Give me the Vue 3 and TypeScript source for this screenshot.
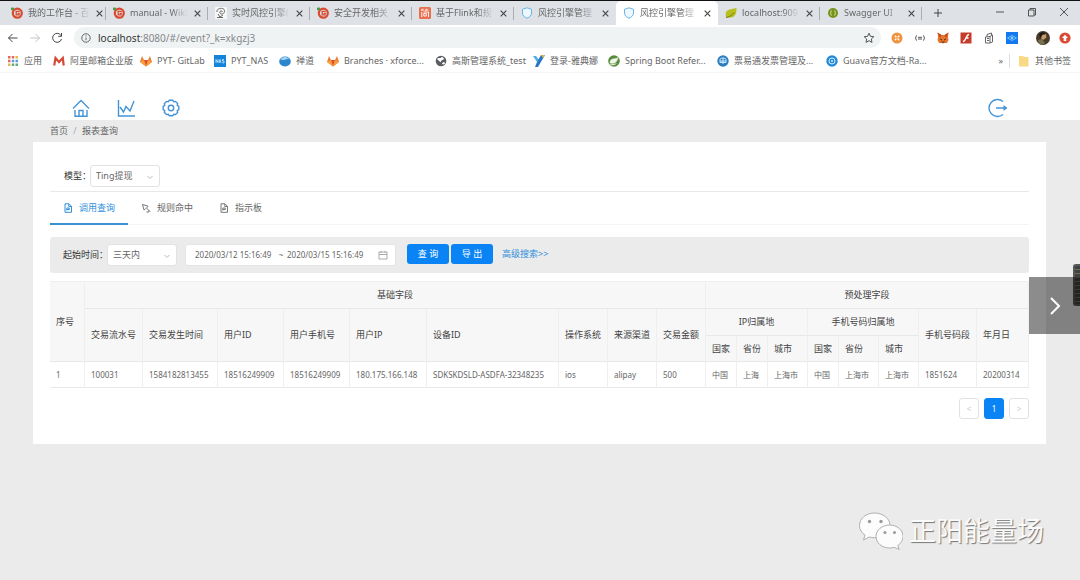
<script setup lang="ts">
import { ref } from 'vue'

interface BrowserTab { icon: string; title: string; active?: boolean }
interface Bookmark { icon: string; title: string; width: number }

const browserTabs: BrowserTab[] = [
  { icon: 'g', title: '我的工作台 - 百' },
  { icon: 'g', title: 'manual - Wiki' },
  { icon: 'sketch', title: '实时风控引擎(' },
  { icon: 'g', title: '安全开发相关' },
  { icon: 'jian', title: '基于Flink和规' },
  { icon: 'shield', title: '风控引擎管理' },
  { icon: 'shield', title: '风控引擎管理', active: true },
  { icon: 'leaf', title: 'localhost:909' },
  { icon: 'swagger', title: 'Swagger UI' },
]

const bookmarks: Bookmark[] = [
  { icon: 'apps', title: '应用', width: 45 },
  { icon: 'mail', title: '阿里邮箱企业版', width: 87 },
  { icon: 'fox', title: 'PYT- GitLab', width: 74 },
  { icon: 'nas', title: 'PYT_NAS', width: 65 },
  { icon: 'zen', title: '禅道', width: 48 },
  { icon: 'fox', title: 'Branches · xforce...', width: 108 },
  { icon: 'globe', title: '高斯管理系统_test', width: 98 },
  { icon: 'why', title: '登录-雅典娜', width: 75 },
  { icon: 'spring', title: 'Spring Boot Refer...', width: 109 },
  { icon: 'ticket', title: '票易通发票管理及...', width: 109 },
  { icon: 'guava', title: 'Guava官方文档-Ra...', width: 98 },
]

const columnWidths = [35, 58, 75, 66, 66, 77, 132, 49, 49, 49, 31, 31, 40, 31, 40, 40, 58, 52]
const baseFields = ['交易流水号', '交易发生时间', '用户ID', '用户手机号', '用户IP', '设备ID', '操作系统', '来源渠道', '交易金额']
const regionFields = ['国家', '省份', '城市', '国家', '省份', '城市']
const rows = [
  ['1', '100031', '1584182813455', '18516249909', '18516249909', '180.175.166.148', 'SDKSKDSLD-ASDFA-32348235', 'ios', 'alipay', '500', '中国', '上海', '上海市', '中国', '上海市', '上海市', '1851624', '20200314'],
]

const url = ref('localhost:8080/#/event?_k=xkgzj3')
const model = ref('Ting提现')
const period = ref('三天内')
const rangeStart = ref('2020/03/12 15:16:49')
const rangeEnd = ref('2020/03/15 15:16:49')
const views = [
  { icon: 'file', title: '调用查询' },
  { icon: 'branch', title: '规则命中' },
  { icon: 'file', title: '指示板' },
]
const activeView = ref(0)
</script>

<template>
  <div class="screen">
    <header class="browser">
      <div class="tab-strip">
        <div v-for="(tab, i) in browserTabs" :key="i" class="browser-tab" :class="{ active: tab.active, before: i === 5 }">
          <svg class="icon12" viewBox="0 0 12 12" aria-hidden="true">
            <g v-if="tab.icon === 'g'">
              <circle cx="6.3" cy="6.2" r="4.5" fill="none" stroke="#d9492f" stroke-width="2.2" />
              <path d="M8.8 4.4H5.2v3.5h3V6.3H6.6" fill="none" stroke="#d9492f" stroke-width="1.3" />
              <path d="M0 .6h3v2.6H0z" fill="#4b9b46" />
            </g>
            <g v-else-if="tab.icon === 'sketch'">
              <path d="M0 0h12v12H0z" fill="#f7f7f7" />
              <path d="M2 5C1 1 9 0 9.500 3.500S6 8 5 6s2-3 2.500-1M3 7l2 3 3-2M2 10.500h6" fill="none" stroke="#666" stroke-width="1" />
            </g>
            <g v-else-if="tab.icon === 'jian'">
              <rect width="12" height="12" rx="1.500" fill="#e9704f" />
              <path d="M2.500 3h2.800M6.500 3h3M3.500 1.700 2.300 4M7.500 1.700 6.500 4M2.800 5v5M4.500 5h5v5M4.800 6.500h2.500v2.500H4.800z" fill="none" stroke="#fff" stroke-width=".9" />
            </g>
            <path v-else-if="tab.icon === 'shield'" d="M6 .8 10.500 2.300V6c0 2.500-2 4.200-4.500 5.200C3.500 10.200 1.500 8.500 1.500 6V2.300z" fill="#edf7fd" stroke="#68b5e4" />
            <g v-else-if="tab.icon === 'leaf'">
              <path d="M1 10.500C-.5 3 3 2.500 11.500 1c0 6-1 9-6 9.500z" fill="#b8bf1e" />
              <path d="M1 10.500c3-.5 6-2 8-5" fill="none" stroke="#747d12" stroke-width="1" />
            </g>
            <g v-else>
              <circle cx="6" cy="6" r="5" fill="#77921d" />
              <path d="M4.500 3.500c-1 0 0 2-1.200 2.500 1.200.5.2 2.500 1.200 2.500M7.500 3.500c1 0 0 2 1.200 2.500-1.200.5-.2 2.500-1.200 2.500" fill="none" stroke="#dce8a5" />
            </g>
          </svg>
          <span class="tab-title">{{ tab.title }}</span>
          <button class="plain close" aria-label="关闭标签页">
            <svg viewBox="0 0 8 8"><path d="m1.500 1.500 5 5m0-5-5 5" /></svg>
          </button>
        </div>
        <button class="plain new-tab" aria-label="新标签页">
          <svg viewBox="0 0 10 10"><path d="M5 1v8M1 5h8" /></svg>
        </button>
        <div class="window-controls">
          <button class="plain" aria-label="最小化"><svg viewBox="0 0 10 10"><path d="M1 5h8" /></svg></button>
          <button class="plain" aria-label="还原"><svg viewBox="0 0 10 10"><path d="M1.500 3h5.500v6H1.500zM3 3V1.500h5.500V8H7" /></svg></button>
          <button class="plain" aria-label="关闭"><svg viewBox="0 0 10 10"><path d="m1 1 8 8m0-8L1 9" /></svg></button>
        </div>
      </div>

      <div class="toolbar">
        <button class="plain nav" aria-label="后退"><svg viewBox="0 0 12 12"><path d="M10.500 6h-9M5.500 2l-4 4 4 4" stroke="#444" /></svg></button>
        <button class="plain nav" aria-label="前进"><svg viewBox="0 0 12 12"><path d="M1.500 6h9M6.500 2l4 4-4 4" stroke="#c3c3c3" /></svg></button>
        <button class="plain nav" aria-label="刷新"><svg viewBox="0 0 12 12"><path d="M9.800 3.200A4.500 4.500 0 1 0 10.500 7M10.500 1v3.300H7.200" stroke="#444" /></svg></button>
        <div class="address">
          <svg class="info" viewBox="0 0 10 10" aria-hidden="true"><circle cx="5" cy="5" r="4.200" /><path d="M5 4.500v2.800M5 2.500v1" /></svg>
          <label class="url">
            <span class="url-shown"><b>{{ url.slice(0, 9) }}</b>{{ url.slice(9) }}</span>
            <input v-model="url" aria-label="地址" />
          </label>
          <button class="plain star" aria-label="收藏"><svg viewBox="0 0 12 12"><path d="m6 1.200 1.400 3.100 3.400.4-2.500 2.300.7 3.400L6 8.700l-3 1.700.7-3.400L1.200 4.700l3.400-.4z" /></svg></button>
        </div>
        <div class="extensions">
          <svg class="icon12" viewBox="0 0 12 12"><circle cx="6" cy="6" r="5.500" fill="#f1923c" /><path d="m3.800 3.800 4.400 4.400m0-4.400L3.800 8.200" stroke="#fff" stroke-width="1.300" /><circle cx="6" cy="6" r="1.500" fill="#f6b277" /></svg>
          <svg class="icon12" viewBox="0 0 12 12"><path d="M3 3.500C1.500 3.500 2.500 6 1 6c1.500 0 .5 2.500 2 2.500M9 3.500c1.500 0 .5 2.500 2 2.500-1.500 0-.5 2.500-2 2.500M4 5.300h4M4 7h4" fill="none" stroke="#555" /></svg>
          <svg class="icon12" viewBox="0 0 12 12"><path d="m.5.500 4 2.500h3l4-2.500L11 5l.5 3-1.500 3H7.500L6 11.500 4.500 11H2L.5 8 1 5z" fill="#e8752c" /><path d="m.5.500 4 2.500L3 6zm11 0-4 2.500L9 6z" fill="#bd4c21" /><path d="m3 7 2 1M9 7 7 8M4.500 10h3" stroke="#4d352c" /></svg>
          <svg class="icon12" viewBox="0 0 12 12"><path d="M.5.500h11v11H.5z" fill="#c63c2c" /><path d="M9 2.500C6 2.500 6 9.500 3 9.500M5.500 6h3" fill="none" stroke="#fff" stroke-width="1.400" /></svg>
          <svg class="icon12" viewBox="0 0 12 12"><path d="M4 5V2.500L8.500 1v2M2.500 5 7 4.500v6.500H2.500zM7 4.500 9.500 3v7L7 11M4 6.500h2M4 8.500h2" fill="none" stroke="#666" /></svg>
          <svg class="icon12" viewBox="0 0 12 12"><path d="M0 0h12v12H0z" fill="#1479ee" /><path d="m1.500 6 4.500-2.500L10.500 6 6 8.500z" fill="none" stroke="#71c5ff" /><circle cx="6" cy="6" r="1.300" fill="#8dd8ff" /></svg>
          <svg class="avatar" viewBox="0 0 14 14"><circle cx="7" cy="7" r="7" fill="#493b2a" /><path d="M6 2c4-1 5 3 4 5l-3 2L5 7z" fill="#c79b65" /><path d="m2 9 4-1 3 4-3 2C4 14 2 12 2 9z" fill="#75714c" /><path d="M3 4c1-3 5-4 7-1L6 4 5 7z" fill="#1d1a17" /></svg>
          <svg class="icon12" viewBox="0 0 12 12"><circle cx="6" cy="6" r="5.600" fill="#da4b34" /><path d="M6 2.800 9 6H7.300v3H4.700V6H3z" fill="#fff" /></svg>
        </div>
      </div>

      <nav class="bookmarks" aria-label="书签">
        <a v-for="mark in bookmarks" :key="mark.title" href="#" class="bookmark" :style="{ width: mark.width + 'px' }">
          <svg class="icon12" :class="{ small: mark.icon === 'apps' }" viewBox="0 0 12 12" aria-hidden="true">
            <g v-if="mark.icon === 'apps'">
              <path d="M0 0h3v3H0zM4.500 0h3v3h-3zM0 4.500h3v3H0z" fill="#e36b5c" />
              <path d="M9 0h3v3H9zM0 9h3v3H0z" fill="#e6b84e" />
              <path d="M4.500 4.500h3v3h-3zM9 4.500h3v3H9z" fill="#5c9dde" />
              <path d="M4.500 9h3v3h-3zM9 9h3v3H9z" fill="#62ab7a" />
            </g>
            <path v-else-if="mark.icon === 'mail'" d="M1.200 10.500 2.500 3 6 7l3.800-4 .9 7.500" fill="none" stroke="#d54a35" stroke-width="2.200" />
            <g v-else-if="mark.icon === 'fox'">
              <path d="M6 11.500 0 7 2 1l2 4h4l2-4 2 6z" fill="#ef7c32" />
              <path d="M6 11.500 4 5h4z" fill="#df5035" />
              <path d="m0 7 4-2 2 6.500zM12 7 8 5l-2 6.500z" fill="#f6a13c" />
            </g>
            <g v-else-if="mark.icon === 'nas'">
              <path d="M0 0h12v12H0z" fill="#1384dc" />
              <path d="M2 8V4.500l2 3V4.500M5 8l1-3.500L7 8M10 4.500H8.500V6H10v1.800H8.300" fill="none" stroke="#d7efff" stroke-width=".8" />
            </g>
            <g v-else-if="mark.icon === 'zen'">
              <ellipse cx="6" cy="6.500" rx="5.800" ry="5" fill="#2d86cb" />
              <path d="M1.500 5.500c1.500-2 3 .5 5-1 1.500-1 2.500-.5 3.500 0-1-2-2.500-2.500-4.500-2.500S2 3 1.500 5.500z" fill="#9ed2f3" />
            </g>
            <g v-else-if="mark.icon === 'globe'">
              <circle cx="6" cy="6" r="5.300" fill="#5a5e62" />
              <path d="M2 4c2-2 3 0 4-1.500S9 3 9 4 6 5 6 6.500 4 6 2 4zM7 9c0-2 3-2 3-1s-1.500 2-3 1z" fill="#fff" />
            </g>
            <g v-else-if="mark.icon === 'why'">
              <path d="M0 1h3l3 4-2 2z" fill="#51aee8" />
              <path d="M8 0h4L5 12H2l2-5z" fill="#2877c7" /><path d="m8 0 4 0-2 3z" fill="#e7b54a" />
            </g>
            <g v-else-if="mark.icon === 'spring'">
              <circle cx="6" cy="6" r="5.800" fill="#578c3b" />
              <path d="M2 8c5 1 7-1 8-5.500C8 5 2 2 2 8zm0 1.500c3 1 5 0 6.500-1" fill="#eef7e7" stroke="#eef7e7" stroke-width=".6" />
            </g>
            <g v-else-if="mark.icon === 'ticket'">
              <circle cx="6" cy="6" r="5.700" fill="#2b7dbd" />
              <path d="M3 4.500c0-2 6-2 6 0v3H3zM6 3v6M3 6h6" fill="none" stroke="#cce9ff" />
            </g>
            <g v-else>
              <circle cx="6" cy="6" r="5.700" fill="#2088d8" />
              <circle cx="6" cy="6" r="3" fill="none" stroke="#d9f1ff" /><circle cx="6" cy="6" r="1" fill="#d9f1ff" />
            </g>
          </svg>
          <span>{{ mark.title }}</span>
        </a>
        <button class="plain more" aria-label="更多书签">»</button>
        <a href="#" class="bookmark other">
          <svg class="icon12" viewBox="0 0 12 12" aria-hidden="true"><path d="M1 1h4l1 1h4.500v9.500H1z" fill="#f9d983" /></svg>
          <span>其他书签</span>
        </a>
      </nav>
    </header>

    <nav class="site-nav" aria-label="主导航">
      <a href="#" aria-label="首页"><svg viewBox="0 0 18 18"><path d="M1 9.500 9 1.500l8 8M3 11v6.200h12V11M7 17v-5.500h4V17" /></svg></a>
      <a href="#" aria-label="报表"><svg viewBox="0 0 18 18"><path d="M1.500 1v16H18M3 8l3.500 5L9 7.500l4 4.500L17 2" /></svg></a>
      <a href="#" aria-label="设置"><svg viewBox="0 0 18 18"><path d="M7.300 1.200h3.400l1 1.500 1.800-.3 2.100 2.100-.3 1.800 1.500 1v3.400l-1.500 1 .3 1.800-2.100 2.100-1.800-.3-1 1.500H7.300l-1-1.500-1.800.3-2.100-2.100.3-1.800-1.500-1V7.300l1.500-1-.3-1.800 2.100-2.100 1.800.3z" /><circle cx="9" cy="9" r="2.700" /></svg></a>
      <a href="#" class="logout" aria-label="退出"><svg viewBox="0 0 20 20"><path d="M15 3.500a8.500 8.500 0 1 0 0 13M8 10h9" /><path class="solid" d="M15.500 7 19.500 10l-4 3z" /></svg></a>
    </nav>

    <main class="page">
      <nav class="crumbs" aria-label="面包屑"><a href="#">首页</a><span class="slash">/</span><span>报表查询</span></nav>

      <section class="card">
        <div class="model-row">
          <label for="model">模型：</label>
          <span class="select">
            <select id="model" v-model="model"><option>Ting提现</option></select>
            <svg viewBox="0 0 8 8" aria-hidden="true"><path d="m1.500 3 2.500 2.500L6.500 3" /></svg>
          </span>
        </div>

        <div class="views" role="tablist">
          <button v-for="(view, i) in views" :key="view.title" class="plain view" :class="{ active: activeView === i }" role="tab" :aria-selected="activeView === i" @click="activeView = i">
            <svg viewBox="0 0 10 10" aria-hidden="true">
              <path v-if="view.icon === 'file'" d="M2 .8h4L8.500 3.300v6H2zM5.800 1v2.500h2.500M3.800 7.500V5h2.500v1.500H4" />
              <path v-else d="M1.500 1.500 7 3.200 5.500 5 9 8.500M1.500 1.500 3 7l1.800-1.500M8 7.500v1.500H5.500" />
            </svg>
            {{ view.title }}
          </button>
        </div>

        <form class="filter" @submit.prevent>
          <label for="period">起始时间：</label>
          <span class="select">
            <select id="period" v-model="period"><option>三天内</option></select>
            <svg viewBox="0 0 8 8" aria-hidden="true"><path d="m1.500 3 2.500 2.500L6.500 3" /></svg>
          </span>
          <div class="range">
            <input v-model="rangeStart" aria-label="开始时间" />
            <span>~</span>
            <input v-model="rangeEnd" aria-label="结束时间" />
            <svg viewBox="0 0 10 10" aria-hidden="true"><path d="M1 2h8v7H1zM1 4.500h8M3 .8V3M7 .8V3" /></svg>
          </div>
          <button class="primary" type="submit">查 询</button>
          <button class="primary" type="button">导 出</button>
          <a href="#" class="advanced">高级搜索&gt;&gt;</a>
        </form>

        <table>
          <colgroup><col v-for="(w, i) in columnWidths" :key="i" :style="{ width: w + 'px' }" /></colgroup>
          <thead>
            <tr>
              <th rowspan="3">序号</th>
              <th colspan="9" class="center">基础字段</th>
              <th colspan="8" class="center">预处理字段</th>
            </tr>
            <tr>
              <th v-for="field in baseFields" :key="field" rowspan="2">{{ field }}</th>
              <th colspan="3" class="center">IP归属地</th>
              <th colspan="3" class="center">手机号码归属地</th>
              <th rowspan="2">手机号码段</th>
              <th rowspan="2">年月日</th>
            </tr>
            <tr><th v-for="(field, i) in regionFields" :key="i" class="low">{{ field }}</th></tr>
          </thead>
          <tbody>
            <tr v-for="row in rows" :key="row[0]"><td v-for="(cell, i) in row" :key="i">{{ cell }}</td></tr>
          </tbody>
        </table>

        <nav class="pager" aria-label="分页">
          <button disabled aria-label="上一页">&lt;</button>
          <button class="current">1</button>
          <button disabled aria-label="下一页">&gt;</button>
        </nav>
      </section>
    </main>

    <div class="side-widget"></div>
    <button class="plain next" aria-label="下一张"><svg viewBox="0 0 20 20"><path d="m6 2 8 8-8 8" /></svg></button>

    <div class="watermark">
      <svg viewBox="0 0 44 38" aria-hidden="true">
        <path d="M15.500 1C7 1 .5 6.500.5 13.500c0 4 2 7.300 5.500 9.600L4.500 28l5.700-3c1.700.5 3.500.7 5.300.7 8.500 0 15.500-5.200 15.500-12.200S24 1 15.500 1z" />
        <path d="M30.500 13C23 13 17 18 17 24.500S23 36 30.500 36c1.700 0 3.300-.2 4.700-.7l5 2.200-1.400-4c3-2.100 5.200-5.300 5.200-9C44 18 38 13 30.500 13z" />
        <g><circle cx="10.500" cy="9.500" r="1.700" /><circle cx="22" cy="9.500" r="1.700" /><circle cx="26" cy="20.500" r="1.500" /><circle cx="35.500" cy="20.500" r="1.500" /></g>
      </svg>
      <span>正阳能量场</span>
    </div>
  </div>
</template>

<style>
body { background: #ebebeb; }
</style>

<style scoped>
.screen {
  position: relative;
  min-height: 100vh;
  overflow: hidden;
  background: #ebebeb;
  color: #666;
  font-family: "Noto Sans", "Noto Sans CJK SC", sans-serif;
  font-size: 9px;
  line-height: 14px;
}
.screen * { box-sizing: border-box; }
svg { display: block; flex: none; fill: none; }
a { color: inherit; text-decoration: none; }
button, input, select { font: inherit; color: inherit; }
.plain { display: flex; align-items: center; justify-content: center; border: 0; padding: 0; background: none; }
.icon12 { width: 12px; height: 12px; }
.small { width: 10px; height: 10px; margin: 0 1px 0 0; }

.browser { background: #fff; border-bottom: 1px solid #f6f6f6; }
.tab-strip { display: flex; height: 25px; padding-left: 4px; background: #dee1e6; border-top: 1px solid #111; }
.browser-tab { position: relative; display: flex; flex: 0 1 102px; align-items: center; min-width: 0; padding: 0 6px 0 7px; gap: 5px; }
.browser-tab::after { content: ""; position: absolute; right: 0; top: 6px; height: 13px; border-right: 1px solid #aaadb1; }
.browser-tab.active::after, .browser-tab.before::after { display: none; }
.browser-tab.active { background: #fff; border-radius: 5px 5px 0 0; }
.tab-title { flex: 1; white-space: nowrap; mask-image: linear-gradient(90deg, #000 70%, transparent); }
.close { width: 9px; }
.close svg { width: 9px; height: 9px; stroke: #444; stroke-width: 1; }
.new-tab { width: 32px; }
.new-tab svg { width: 10px; height: 10px; stroke: #444; stroke-width: 1; }
.window-controls { display: flex; margin-left: auto; padding-bottom: 2px; }
.window-controls button { width: 32px; }
.window-controls svg { width: 10px; height: 10px; stroke: #555; stroke-width: 1; }

.toolbar { display: flex; align-items: center; height: 25px; padding: 2px 9px 2px 2px; }
.nav { width: 22px; }
.nav svg { width: 12px; height: 12px; stroke-width: 1; }
.address { display: flex; align-items: center; flex: 1; height: 21px; margin-left: 6px; padding: 0 6px; background: #f0f3f4; border-radius: 10px; }
.info { width: 10px; height: 10px; margin: 0 7px 0 1px; stroke: #666; }
.url { position: relative; flex: 1; font-size: 10px; color: #85888b; }
.url b { font-weight: 400; color: #333; }
.url input { position: absolute; inset: 0; width: 100%; border: 0; padding: 0; background: none; color: transparent; caret-color: #333; }
.star svg { width: 12px; height: 12px; stroke: #555; stroke-width: 1; }
.extensions { display: flex; align-items: center; gap: 11px; margin-left: 10px; }
.avatar { width: 14px; height: 14px; margin: 0 -2px 0 7px; }

.bookmarks { display: flex; align-items: center; height: 22px; padding: 0 9px 0 8px; }
.bookmark { display: flex; align-items: center; flex: none; gap: 5px; white-space: nowrap; }
.more { margin-left: auto; margin-right: 6px; }
.other { padding-left: 8px; border-left: 1px solid #ddd; }

.site-nav { display: flex; align-items: flex-end; gap: 27px; height: 47px; padding: 0 72px; background: #fff; }
.site-nav a { padding-bottom: 3px; }
.site-nav svg { width: 18px; height: 18px; stroke: #4494d5; stroke-width: 1.400; }
.site-nav .logout { margin-left: auto; padding-bottom: 2px; }
.site-nav .logout svg { width: 20px; height: 20px; }
.site-nav .solid { fill: #4494d5; stroke: none; }

.page { padding: 4px 34px 0 33px; }
.crumbs { display: flex; height: 18px; padding-left: 17px; }
.slash { width: 14px; text-align: center; color: #aaa; }
.card { padding: 22px 17px 25px; background: #fff; }
.model-row { display: flex; align-items: center; height: 28px; padding: 0 0 4px 14px; border-bottom: 1px solid #e8e8e8; }
.model-row label { width: 26px; white-space: nowrap; color: #333; }
.select { position: relative; display: block; width: 70px; height: 22px; }
.select select { width: 100%; height: 100%; padding: 0 5px; border: 1px solid #e2e2e2; border-radius: 3px; background: #fff; appearance: none; }
.select svg { position: absolute; right: 6px; top: 8px; width: 8px; height: 8px; stroke: #bbb; pointer-events: none; }

.views { display: flex; height: 33px; border-bottom: 1px solid #f4f4f4; }
.view { gap: 6px; height: 33px; padding: 0 13px; border-bottom: 2px solid transparent; }
.view svg { width: 10px; height: 10px; stroke: #777; stroke-width: 1; }
.view.active { color: #2f8fdc; border-color: #3a92d5; }
.view.active svg { stroke: #2f8fdc; }

.filter { display: flex; align-items: center; height: 36px; margin: 12px 0 8px; padding-left: 13px; background: #ebebeb; border-radius: 3px; }
.filter label { width: 44px; white-space: nowrap; color: #333; }
.range { display: flex; align-items: center; width: 211px; height: 22px; margin: 0 11px 0 8px; padding: 0 7px 0 9px; background: #fff; border: 1px solid #e4e4e4; border-radius: 3px; font-size: 8px; }
.range input { width: 80px; padding: 0; border: 0; background: none; }
.range span { width: 12px; text-align: center; }
.range svg { width: 10px; height: 10px; margin-left: auto; stroke: #aaa; }
.primary { width: 42px; height: 20px; margin: 0 2px 3px 0; padding: 0; border: 0; border-radius: 3px; background: #0a84f5; color: #fff; }
.advanced { margin: 0 0 3px 7px; color: #2f8fdc; }

table { width: 100%; table-layout: fixed; border-collapse: separate; border-spacing: 0; border-top: 1px solid #efefef; }
th, td { padding: 0 0 0 6px; border-right: 1px solid #efefef; border-bottom: 1px solid #e8e8e8; text-align: left; font-weight: 400; white-space: nowrap; }
th { height: 27px; background: #f7f7f7; color: #444; }
th.low { height: 26px; }
th.center { padding: 0; text-align: center; }
td { height: 26px; font-size: 8px; }

.pager { display: flex; justify-content: flex-end; gap: 5px; margin-top: 10px; }
.pager button { width: 20px; height: 21px; padding: 0; border: 1px solid #e2e2e2; border-radius: 3px; background: #fff; color: #ccc; font-size: 8px; }
.pager .current { border-color: #0a84f5; background: #0a84f5; color: #fff; }

.next { position: absolute; right: 0; top: 277px; width: 51px; height: 57px; background: rgba(0, 0, 0, .45); }
.next svg { width: 20px; height: 20px; stroke: #fff; stroke-width: 2; }
.side-widget { position: absolute; right: 0; top: 264px; width: 7px; height: 42px; border: 2px solid #555958; border-right: 0; border-radius: 3px 0 0 3px; background: repeating-linear-gradient(#3d4244 0 3px, #7a6a45 3px 4px); }
.watermark { position: absolute; right: 36px; bottom: 29px; display: flex; align-items: center; gap: 6px; color: #fafafa; font-size: 27px; line-height: 40px; text-shadow: 1px 1px 1px #777; }
.watermark svg { width: 44px; height: 38px; fill: #fcfcfc; stroke: #b0b0b0; stroke-width: 1; }
.watermark g { fill: #999; stroke: none; }
</style>
